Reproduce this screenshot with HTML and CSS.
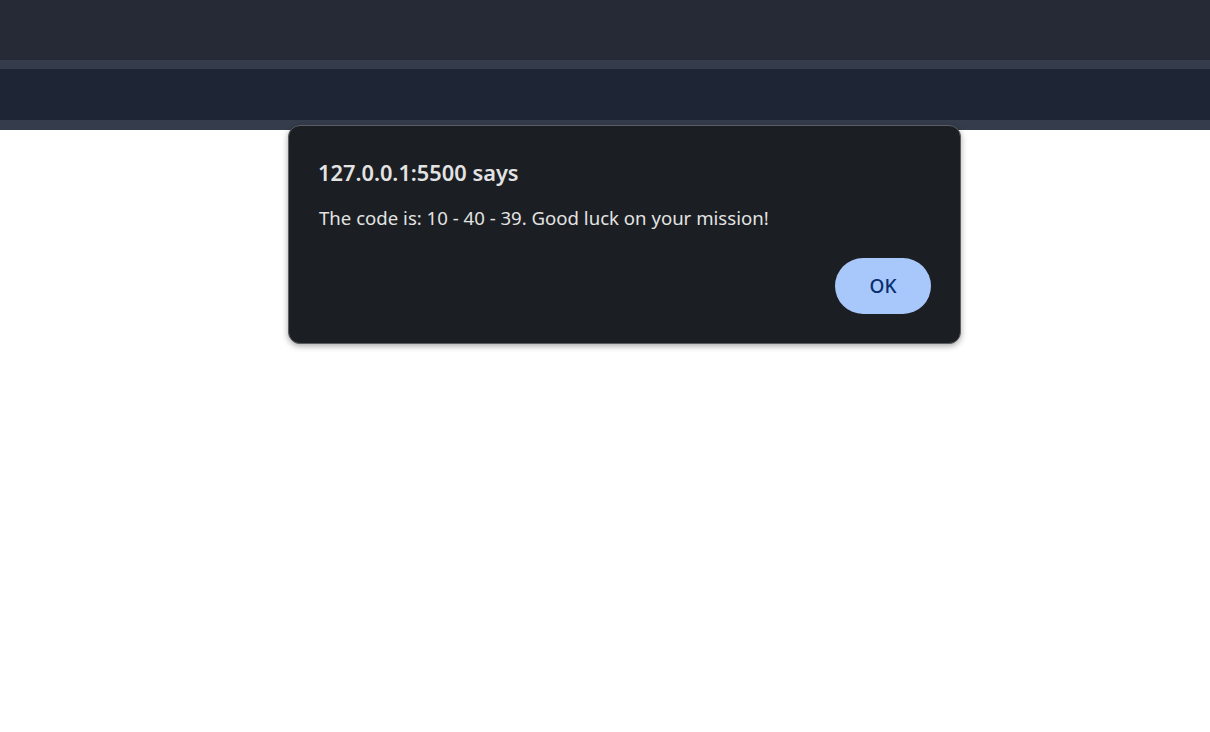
FILE: index.html
```html
<!DOCTYPE html>
<html>
<head>
<meta charset="utf-8">
<link rel="stylesheet" href="styles.css">
</head>
<body>
<div class="page">
  <header class="topbar"></header>
  <div class="rule"></div>
  <div class="band"></div>
  <div class="rule rule-bottom"></div>
  <main class="content"></main>
</div>
<div class="dialog" role="alertdialog">
  <h1 class="dialog-title">127.0.0.1:5500 says</h1>
  <p class="dialog-msg">The code is: 10 - 40 - 39. Good luck on your mission!</p>
  <div class="dialog-actions">
    <button class="ok-btn">OK</button>
  </div>
</div>
</body>
</html>
```

FILE: styles.css
```css
html, body {
  margin: 0;
  padding: 0;
  background: #ffffff;
  font-family: "Noto Sans", "Open Sans", sans-serif;
}
.page {
  display: flex;
  flex-direction: column;
  width: 1210px;
  height: 732px;
}
.topbar {
  height: 60px;
  background: #252a36;
}
.rule {
  height: 9px;
  background: #353d4d;
}
.rule-bottom {
  height: 10px;
}
.band {
  height: 51px;
  background: #1e2535;
}
.content {
  flex: 1;
  background: #ffffff;
}
.dialog {
  position: absolute;
  left: 288px;
  top: 125px;
  width: 673px;
  height: 219px;
  box-sizing: border-box;
  background: #1b1e22;
  border: 1px solid #5a5d62;
  border-radius: 12px;
  box-shadow: 0 2px 6px rgba(0, 0, 0, 0.35);
  padding: 29px;
  display: flex;
  flex-direction: column;
  color: #e3e3e3;
}
.dialog-title {
  margin: 4px 0 0 0;
  font-size: 21.8px;
  font-weight: 600;
  line-height: 28px;
  color: #e3e3e3;
}
.dialog-msg {
  margin: 19px 0 0 1px;
  font-size: 18.6px;
  line-height: 24px;
  color: #e3e3e3;
}
.dialog-actions {
  margin-top: auto;
  display: flex;
  justify-content: flex-end;
}
.ok-btn {
  width: 96px;
  height: 56px;
  border: none;
  border-radius: 28px;
  background: #a8c7fa;
  color: #062e6f;
  font-family: "Noto Sans", "Open Sans", sans-serif;
  font-size: 19px;
  font-weight: 500;
  padding: 0;
}
```
